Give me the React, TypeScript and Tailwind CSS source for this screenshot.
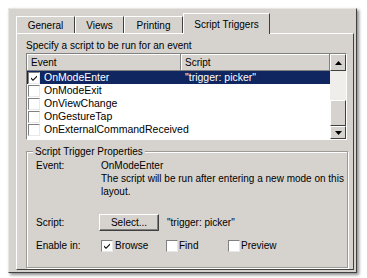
import React from 'react';

const font = { fontFamily: '"Liberation Sans", Arial, sans-serif' };

function Check({ checked }: { checked?: boolean }) {
  return (
    <span className="inline-flex h-[12px] w-[12px] shrink-0 items-center justify-center border border-t-[#808080] border-l-[#808080] border-r-[#e8e8e8] border-b-[#e8e8e8] bg-white">
      {checked && (
        <svg width="8" height="8" viewBox="0 0 8 8">
          <path d="M1 3.5 L3 5.5 L7 1.5 L7 3 L3 7 L1 5 Z" fill="#000" />
        </svg>
      )}
    </span>
  );
}

function Tab({ label, w, active }: { label: string; w: string; active?: boolean }) {
  if (active) {
    return (
      <div
        className={`${w} relative z-10 -mb-[1px] flex h-[21px] items-center justify-center border-l border-t border-r border-l-white border-t-white border-r-[#404040] bg-[#d6d3ce] text-[10px] text-black`}
      >
        {label}
      </div>
    );
  }
  return (
    <div
      className={`${w} flex h-[17px] items-center justify-center border-l border-t border-r border-l-white border-t-white border-r-[#404040] text-[10px] text-black`}
    >
      {label}
    </div>
  );
}

const rows = [
  { name: 'OnModeEnter', script: '"trigger: picker"', checked: true, sel: true },
  { name: 'OnModeExit' },
  { name: 'OnViewChange' },
  { name: 'OnGestureTap' },
  { name: 'OnExternalCommandReceived' },
];

export default function App() {
  return (
    <div className="h-[278px] w-[367px] bg-white pl-[8px] pt-[8px]" style={font}>
      <div className="flex h-[265px] w-[349px] flex-col border border-t-[#e8e6e2] border-l-[#e8e6e2] border-r-[#404040] border-b-[#404040] bg-[#d6d3ce] px-[7px] pt-[4px] shadow-[2px_2px_3px_rgba(0,0,0,0.45)]">
        {/* tabs */}
        <div className="flex items-end">
          <Tab label="General" w="w-[59px]" />
          <Tab label="Views" w="w-[49px]" />
          <Tab label="Printing" w="w-[59px]" />
          <Tab label="Script Triggers" w="w-[87px]" active />
        </div>
        {/* tab panel */}
        <div className="flex h-[237px] w-[338px] flex-col border border-t-white border-l-white border-r-[#404040] border-b-[#404040] px-[9px] pt-[5px]">
          <div className="text-[10px] leading-[13px] text-black">Specify a script to be run for an event</div>
          {/* list */}
          <div className="mt-[1px] flex h-[87px] w-[321px] border border-t-[#808080] border-l-[#808080] border-r-white border-b-white bg-white">
            <div className="flex flex-1 flex-col">
              <div className="flex h-[17px] bg-[#d6d3ce] text-[10px] text-black">
                <div className="flex w-[154px] items-center border-r border-b border-r-[#808080] border-b-[#808080] pl-[4px] shadow-[inset_1px_1px_0_white]">Event</div>
                <div className="flex flex-1 items-center border-r border-b border-r-[#808080] border-b-[#808080] pl-[4px] shadow-[inset_1px_1px_0_white]">Script</div>
              </div>
              {rows.map((r) => (
                <div
                  key={r.name}
                  className={`flex h-[13px] items-center text-[10.5px] ${r.sel ? 'bg-[#0f2661] text-white' : 'text-black'}`}
                >
                  <div className="flex w-[154px] items-center gap-[4px] pl-[1px]">
                    <Check checked={r.checked} />
                    <span>{r.name}</span>
                  </div>
                  <div className="pl-[4px]">{r.script}</div>
                </div>
              ))}
            </div>
            {/* scrollbar */}
            <div className="flex w-[16px] flex-col bg-[#efeeeb]">
              <div className="flex h-[17px] items-center justify-center border border-t-white border-l-white border-r-[#404040] border-b-[#404040] bg-[#d6d3ce]">
                <svg width="7" height="4" viewBox="0 0 7 4"><path d="M3.5 0 L7 4 L0 4 Z" fill="#000" /></svg>
              </div>
              <div className="flex-1" />
              <div className="h-[26px] border border-t-white border-l-white border-r-[#404040] border-b-[#404040] bg-[#d6d3ce]" />
              <div className="flex h-[13px] items-center justify-center border border-t-white border-l-white border-r-[#404040] border-b-[#404040] bg-[#d6d3ce]">
                <svg width="7" height="4" viewBox="0 0 7 4"><path d="M0 0 L7 0 L3.5 4 Z" fill="#000" /></svg>
              </div>
            </div>
          </div>
          {/* group box */}
          <div className="relative mt-[11px] h-[117px] w-[322px] border border-[#9c9a95] shadow-[inset_1px_1px_0_white,1px_1px_0_white]">
            <div className="absolute -top-[7px] left-[6px] bg-[#d6d3ce] px-[2px] text-[10px] leading-[13px] text-black">
              Script Trigger Properties
            </div>
            <div className="flex flex-col pl-[9px] pt-[7px] text-[10px] leading-[13px] text-black">
              <div className="flex">
                <div className="w-[65px]">Event:</div>
                <div className="flex flex-col">
                  <span>OnModeEnter</span>
                  <span>The script will be run after entering a new mode on this</span>
                  <span>layout.</span>
                </div>
              </div>
              <div className="mt-[16px] flex items-center">
                <div className="w-[63px]">Script:</div>
                <div className="flex h-[17px] w-[60px] items-center justify-center border border-t-white border-l-white border-r-[#404040] border-b-[#404040] bg-[#d6d3ce] shadow-[inset_-1px_-1px_0_#808080]">
                  Select...
                </div>
                <div className="pl-[8px]">"trigger: picker"</div>
              </div>
              <div className="mt-[8px] flex items-center">
                <div className="w-[65px]">Enable in:</div>
                <div className="flex w-[65px] items-center gap-[2px]">
                  <Check checked />
                  <span>Browse</span>
                </div>
                <div className="flex w-[62px] items-center gap-[1px]">
                  <Check />
                  <span>Find</span>
                </div>
                <div className="flex items-center gap-[1px]">
                  <Check />
                  <span>Preview</span>
                </div>
              </div>
            </div>
          </div>
        </div>
      </div>
    </div>
  );
}
